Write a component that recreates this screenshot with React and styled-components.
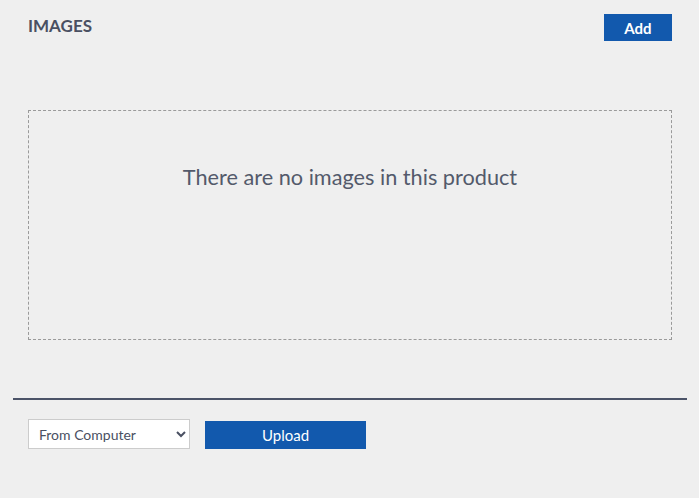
import React from "react";
import styled, { createGlobalStyle } from "styled-components";

const Global = createGlobalStyle`
  html, body { margin: 0; padding: 0; background: #efefef; }
  body { font-family: Lato, "Open Sans", sans-serif; }
`;

const Page = styled.div`
  width: 699px;
  height: 498px;
  background: #efefef;
  box-sizing: border-box;
  padding-top: 14px;
`;

const Header = styled.div`
  display: flex;
  justify-content: space-between;
  align-items: flex-start;
  padding: 0 27px 0 28px;
`;

const Title = styled.h2`
  margin: 0;
  padding-top: 2px;
  font-size: 17px;
  font-weight: 700;
  color: #4a5062;
  line-height: 20px;
`;

const Button = styled.button`
  font-family: Lato, sans-serif;
  background: #1259ad;
  color: #ffffff;
  border: none;
  border-radius: 0;
  padding: 0;
  cursor: pointer;
  width: ${(p) => p.$w}px;
  height: ${(p) => p.$h}px;
  font-size: ${(p) => p.$fs || 14}px;
  font-weight: ${(p) => (p.$bold ? 700 : 400)};
`;

const Dropzone = styled.div`
  margin: 69px 27px 0 28px;
  height: 230px;
  box-sizing: border-box;
  border: 1px dashed #9a9a9a;
  display: flex;
  justify-content: center;
  padding-top: 53px;
`;

const EmptyText = styled.p`
  margin: 0;
  font-size: 21.7px;
  color: #535a6b;
  line-height: 26px;
`;

const Divider = styled.hr`
  margin: 58px 12px 0 13px;
  border: none;
  height: 2px;
  background: #4b5368;
`;

const UploadRow = styled.div`
  display: flex;
  align-items: flex-end;
  gap: 15px;
  padding: 19px 0 0 28px;
`;

const Select = styled.select`
  width: 162px;
  height: 30px;
  box-sizing: border-box;
  border: 1px solid #cccccc;
  border-radius: 0;
  background: #ffffff;
  color: #4a5062;
  font-family: Lato, sans-serif;
  font-size: 14px;
  padding: 0 4px 0 6px;
  outline: none;
`;

export default function App() {
  return (
    <Page>
      <Global />
      <Header>
        <Title>IMAGES</Title>
        <Button $w={68} $h={27} $bold $fs={15}>Add</Button>
      </Header>
      <Dropzone>
        <EmptyText>There are no images in this product</EmptyText>
      </Dropzone>
      <Divider />
      <UploadRow>
        <Select defaultValue="computer">
          <option value="computer">From Computer</option>
          <option value="url">From URL</option>
        </Select>
        <Button $w={161} $h={28} $fs={15}>Upload</Button>
      </UploadRow>
    </Page>
  );
}
